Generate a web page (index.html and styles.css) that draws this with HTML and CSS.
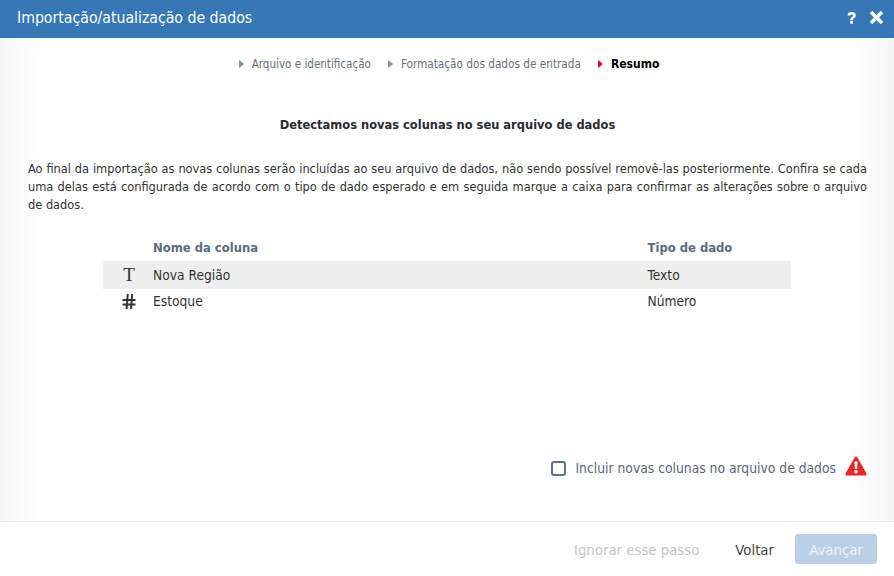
FILE: index.html
```html
<!DOCTYPE html>
<html lang="pt">
<head>
<meta charset="utf-8">
<title>Importação/atualização de dados</title>
<link rel="stylesheet" href="styles.css">
</head>
<body>
<div class="dialog">
  <header class="titlebar">
    <h1 class="title">Importação/atualização de dados</h1>
    <div class="title-actions">
      <svg class="icon-help" width="12" height="14" viewBox="0 0 12 14"><path d="M1.500 4.200C1.700 2 3.400 1 5.600 1c2.400 0 4.200 1.200 4.200 3.400 0 1.500-.9 2.200-1.900 2.900-.8.6-1.100.9-1.100 1.900H4.300c0-1.700.5-2.400 1.600-3.200.7-.5 1.100-.9 1.100-1.500 0-.7-.6-1.100-1.400-1.100-.9 0-1.500.5-1.600 1.300zM4.200 10h2.700v2.800H4.200z" fill="#fff"/></svg>
      <svg class="icon-close" width="15" height="15" viewBox="0 0 15 15"><path d="M2 2l11 11M13 2L2 13" stroke="#fff" stroke-width="3.600"/></svg>
    </div>
  </header>
  <main class="content">
    <nav class="steps">
      <span class="step"><i class="arrow"></i>Arquivo e identificação</span>
      <span class="step"><i class="arrow"></i>Formatação dos dados de entrada</span>
      <span class="step current"><i class="arrow"></i>Resumo</span>
    </nav>
    <h2 class="heading">Detectamos novas colunas no seu arquivo de dados</h2>
    <p class="intro">Ao final da importação as novas colunas serão incluídas ao seu arquivo de dados, não sendo possível removê-las posteriormente. Confira se cada uma delas está configurada de acordo com o tipo de dado esperado e em seguida marque a caixa para confirmar as alterações sobre o arquivo de dados.</p>
    <div class="table">
      <div class="row head"><span class="cell-icon"></span><span class="cell-name">Nome da coluna</span><span class="cell-type">Tipo de dado</span></div>
      <div class="row shaded"><span class="cell-icon type-t">T</span><span class="cell-name">Nova Região</span><span class="cell-type">Texto</span></div>
      <div class="row plain"><span class="cell-icon"><svg class="icon-hash" width="14" height="15" viewBox="0 0 14 15"><path d="M5.800 0L4.600 15M10.200 0L9 15M.5 6h13M.5 10.500h13" stroke="#333" stroke-width="2"/></svg></span><span class="cell-name">Estoque</span><span class="cell-type">Número</span></div>
    </div>
    <div class="confirm">
      <label class="confirm-label"><span class="checkbox"></span>Incluir novas colunas no arquivo de dados</label>
      <svg class="icon-warn" width="22" height="20" viewBox="0 0 22 20"><path d="M11 .5c.5 0 .9.2 1.200.7l9.300 16.300c.5.9 0 2-1.100 2H1.600C.5 19.500 0 18.400.5 17.500L9.800 1.200c.3-.5.7-.7 1.200-.7z" fill="#e32626"/><path d="M9.400 5.500h3.200l-.5 7.500h-2.200zM9.500 14.300h3v3h-3z" fill="#fff"/></svg>
    </div>
  </main>
  <footer class="footer">
    <button class="btn skip">Ignorar esse passo</button>
    <button class="btn back">Voltar</button>
    <button class="btn next">Avançar</button>
  </footer>
</div>
</body>
</html>
```
FILE: styles.css
```css
* { box-sizing: border-box; }
html, body { margin: 0; height: 100%; }
body { font-family: "DejaVu Sans Condensed", "DejaVu Sans", sans-serif; font-size: 12px; color: #333; background: #fff; }
.dialog { width: 894px; height: 576px; display: flex; flex-direction: column; overflow: hidden; }
.titlebar { height: 38px; flex: none; background: #3578b5; color: #fff; display: flex; align-items: center; justify-content: space-between; padding: 0 10px 3px 17px; }
.title { margin: 0; font-size: 15.7px; font-weight: 400; }
.title-actions { display: flex; align-items: center; gap: 11px; }
.icon-help, .icon-close { display: block; }
.content { flex: 1; padding: 0 27px 0 28px; display: flex; flex-direction: column; background: linear-gradient(to right, #f5f5f5, #fff 40px, #fff 854px, #f5f5f5); }
.steps { height: 50px; padding: 1px 0 0 3px; display: flex; justify-content: center; align-items: center; gap: 17px; color: #66707c; font-size: 11.7px; }
.step { display: flex; align-items: center; }
.step:first-child { font-size: 11.55px; }
.arrow { width: 0; height: 0; border-left: 5px solid #7b93ab; border-top: 4px solid transparent; border-bottom: 4px solid transparent; margin-right: 8px; }
.current { color: #000; font-weight: 700; font-size: 12px; }
.current .arrow { border-left-color: #d0112b; }
.heading { margin: 27px 0 0; height: 17px; line-height: 19px; font-size: 12.75px; font-weight: 700; text-align: center; color: #2b2b33; }
.intro { margin: 28px 0 0; line-height: 18px; text-align: justify; color: #333; font-size: 12.68px; }
.table { margin: 19px 76px 0 75px; font-size: 13.7px; }
.row { display: flex; align-items: center; height: 26px; }
.head { height: 28px; font-weight: 700; color: #5d6b7c; font-size: 12.9px; }
.shaded { height: 28px; background: #eee; }
.plain { height: 24px; }
.cell-icon { width: 50px; padding-left: 2px; display: flex; justify-content: center; align-items: center; }
.cell-name { width: 494.5px; }
.type-t { font-family: "Liberation Serif", serif; font-size: 19px; }
.icon-hash { display: block; }
.confirm { margin-top: auto; margin-bottom: 41px; display: flex; align-items: center; justify-content: flex-end; gap: 9px; }
.confirm-label { display: flex; align-items: center; color: #5b6675; font-size: 13.75px; }
.checkbox { width: 15px; height: 15px; border: 2px solid #5d7392; border-radius: 3px; background: #fff; margin-right: 9px; }
.icon-warn { margin-bottom: 4px; }
.footer { height: 55px; flex: none; border-top: 1px solid #e8e8e8; background: #fff; display: flex; align-items: center; justify-content: flex-end; padding: 0 17px 0 0; font-size: 14.8px; }
.btn { font: inherit; border: 0; background: none; height: 30px; padding: 0; }
.skip { color: #c5c5c5; margin-right: 36px; }
.back { color: #444; margin-right: 21px; }
.next { width: 82px; background: #b9d0e6; color: #eef3f8; border-radius: 3px; }
```
